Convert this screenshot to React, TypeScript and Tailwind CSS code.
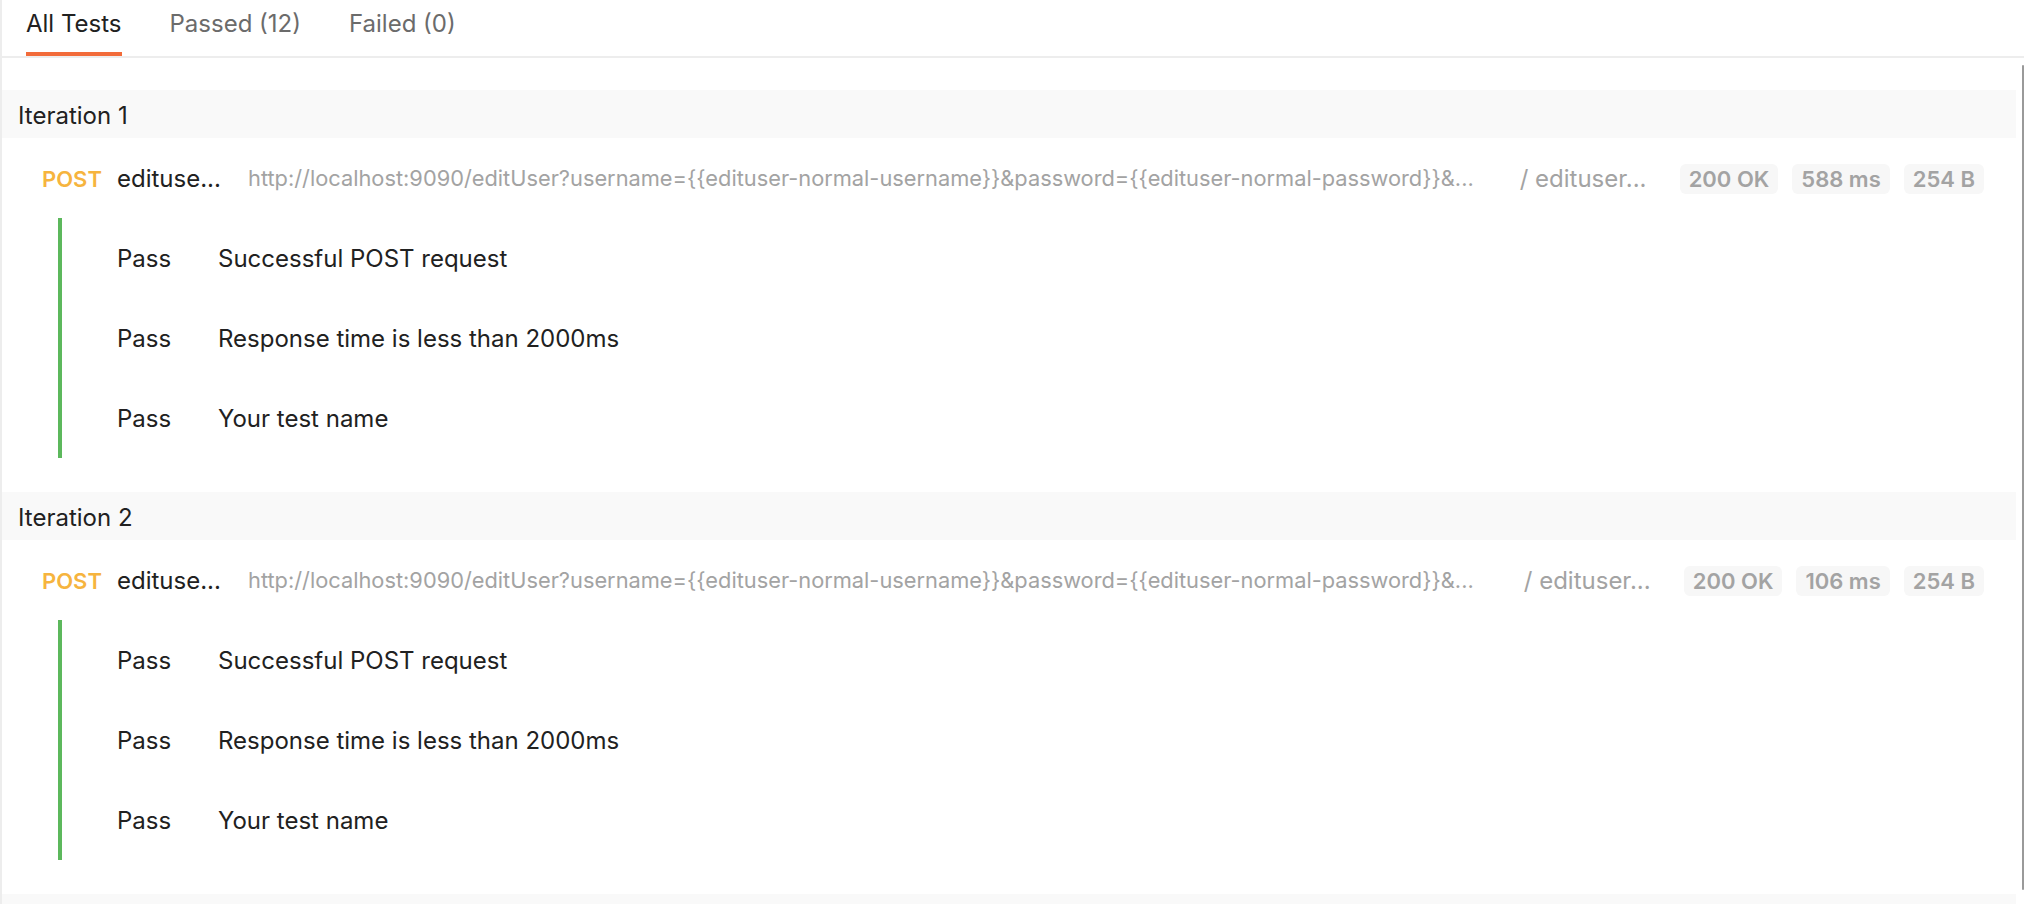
import React from "react";

const FONT = "font-['Inter','Noto_Sans',sans-serif]";

function Badge({ children }: { children: React.ReactNode }) {
  return (
    <span className="flex h-[30px] items-center rounded-[6px] bg-[#f7f7f7] px-[9px] text-[22px] font-semibold leading-none text-[#a3a3a3]">
      {children}
    </span>
  );
}

function TestRow({ name }: { name: string }) {
  return (
    <div className="flex h-20 items-center pt-[2px] text-[24px] leading-none text-[#212121]">
      <span className="w-[101px] shrink-0">Pass</span>
      <span>{name}</span>
    </div>
  );
}

function Iteration({ n, ms }: { n: number; ms: string }) {
  return (
    <div className="mb-[34px]">
      <div className="flex h-12 items-center bg-[#f9f9f9] pl-4 pt-[4px] text-[24px] leading-none text-[#212121]">
        Iteration {n}
      </div>
      <div className="flex h-20 items-center pl-[40px] pr-[32px] pt-[2px]">
        <span className="w-[75px] shrink-0 text-[22px] font-semibold leading-none text-[#f6b43e]">POST</span>
        <span className="w-[131px] shrink-0 text-[24px] leading-none text-[#212121]">edituse...</span>
        <span className="min-w-0 flex-1 whitespace-nowrap text-[21.8px] leading-none text-[#a3a3a3]">
          http://localhost:9090/editUser?username={"{{"}edituser-normal-username{"}}"}&amp;password={"{{"}edituser-normal-password{"}}"}&amp;...
        </span>
        <span className="w-[160px] shrink-0 whitespace-nowrap text-[24px] leading-none text-[#a3a3a3]">/ edituser...</span>
        <div className="flex shrink-0 items-center gap-[14px]">
          <Badge>200 OK</Badge>
          <Badge>{ms}</Badge>
          <Badge>254 B</Badge>
        </div>
      </div>
      <div className="ml-[56px] border-l-4 border-[#5cb85c] pl-[55px]">
        <TestRow name="Successful POST request" />
        <TestRow name="Response time is less than 2000ms" />
        <TestRow name="Your test name" />
      </div>
    </div>
  );
}

export default function App() {
  return (
    <div className={`${FONT} flex h-[904px] w-full flex-col overflow-hidden border-l-2 border-[#ededed] bg-white`}>
      <div className="flex h-[58px] shrink-0 gap-12 border-b-2 border-[#ededed] pl-6">
        <div className="flex h-[56px] flex-col border-b-4 border-[#f26b3a] pt-[9px] text-[24px] leading-[29px] text-[#212121]">
          All Tests
        </div>
        <div className="flex h-[56px] flex-col pt-[9px] text-[24px] leading-[29px] text-[#6b6b6b]">Passed (12)</div>
        <div className="flex h-[56px] flex-col pt-[9px] text-[24px] leading-[29px] text-[#6b6b6b]">Failed (0)</div>
      </div>
      <div className="flex min-h-0 flex-1">
        <div className="min-w-0 flex-1 overflow-hidden pt-8">
          <Iteration n={1} ms="588 ms" />
          <Iteration n={2} ms="106 ms" />
          <div className="h-12 bg-[#f9f9f9]" />
        </div>
        <div className="flex w-2 shrink-0 justify-end pt-[7px] pb-[14px]">
          <div className="h-full w-[2px] rounded-full bg-[#9a9a9a]" />
        </div>
      </div>
    </div>
  );
}
